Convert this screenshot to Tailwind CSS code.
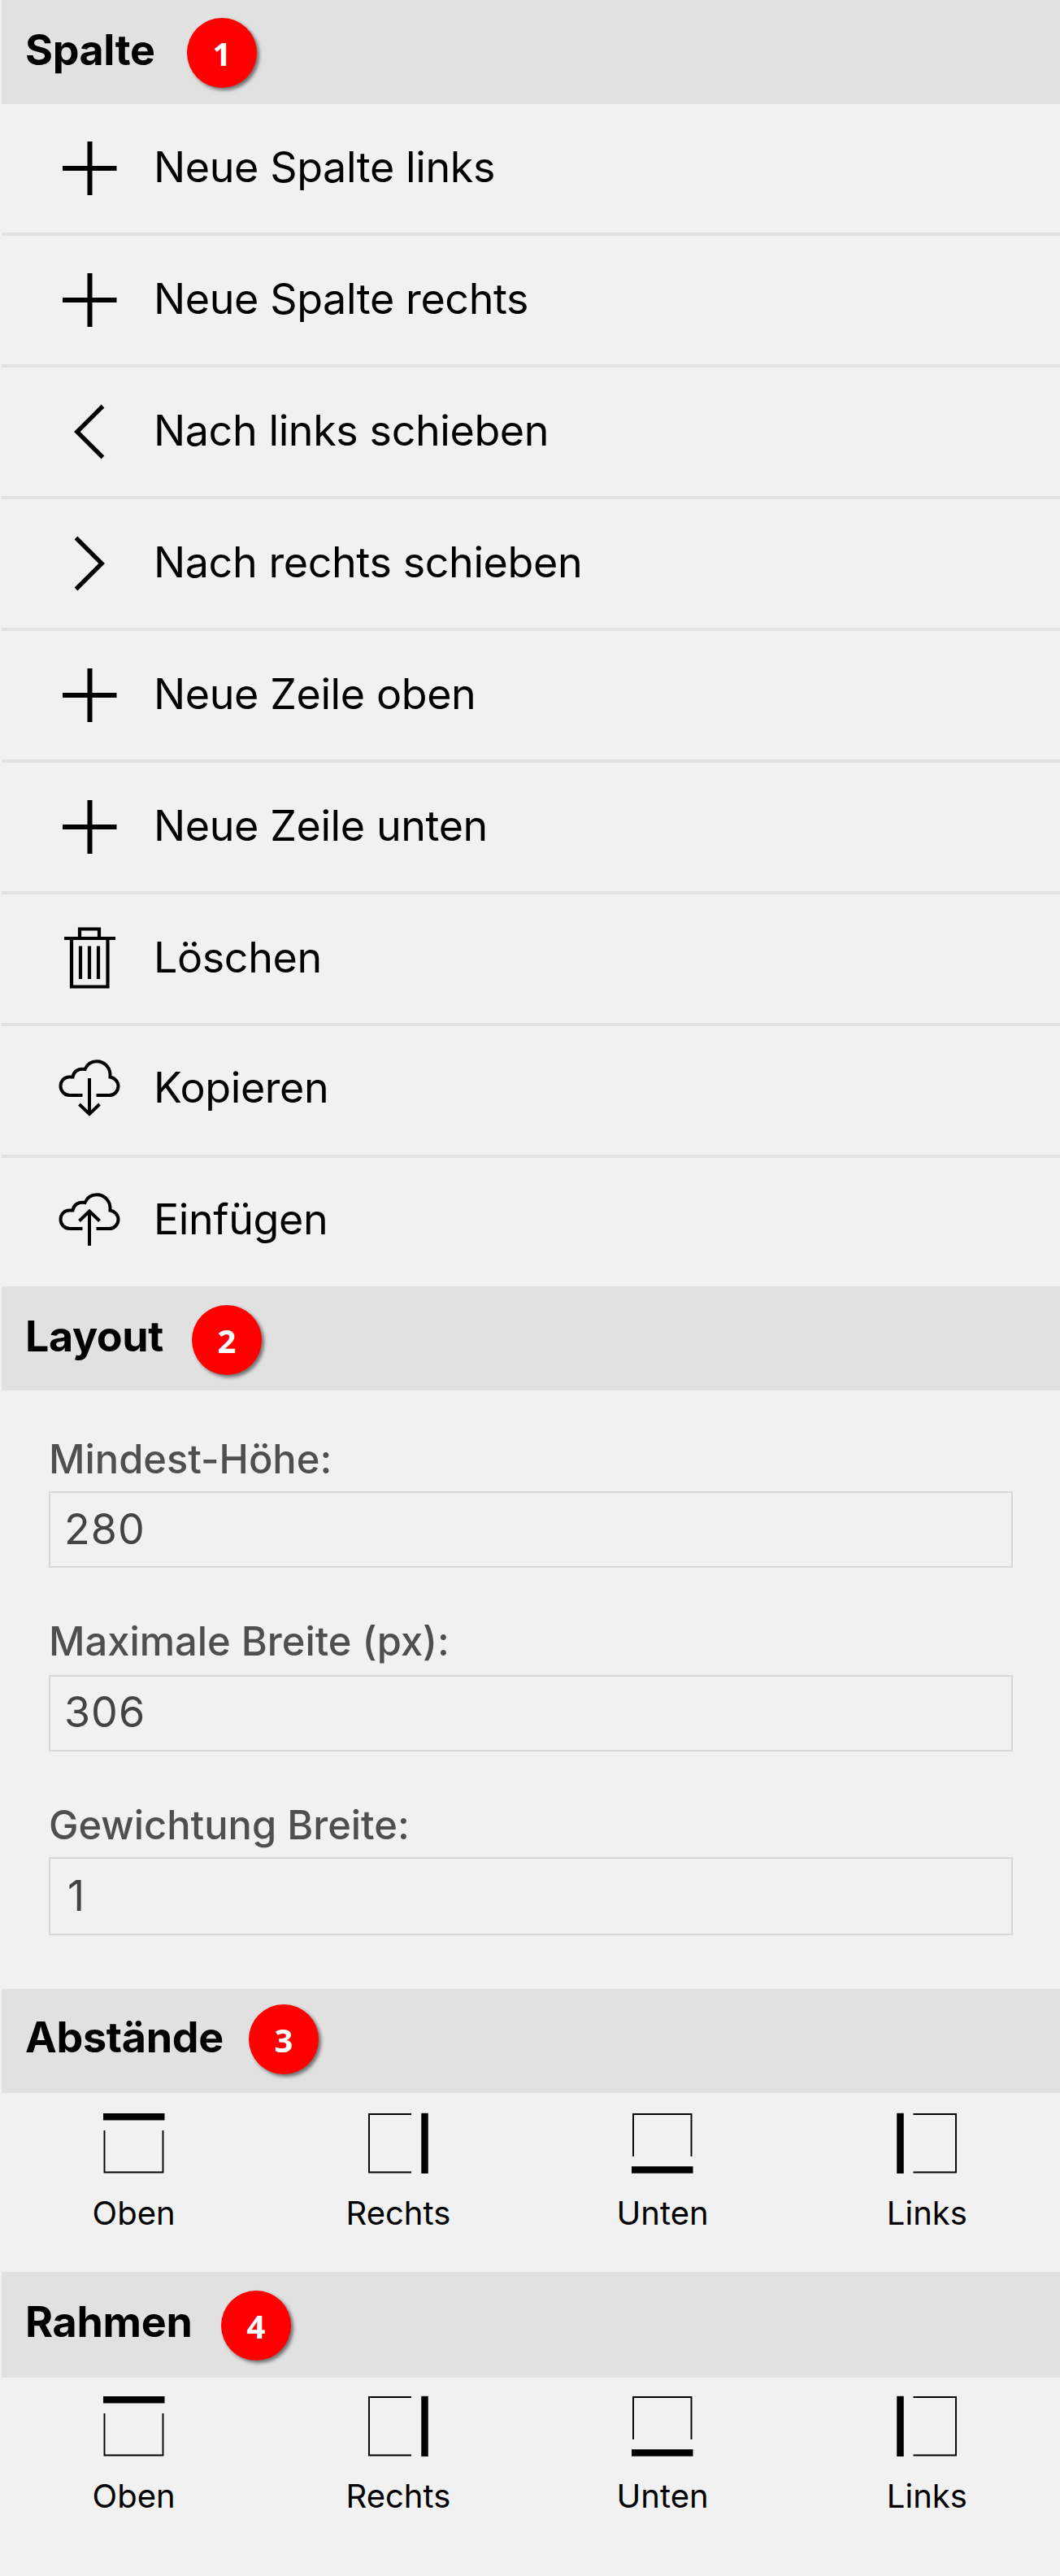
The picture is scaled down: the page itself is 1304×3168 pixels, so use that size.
<!DOCTYPE html>
<html lang="de">
<head>
<meta charset="utf-8">
<title>Spalte</title>
<script src="https://cdn.jsdelivr.net/npm/@tailwindcss/browser@4"></script>
</head>
<body class="bg-[#f1f1f1] font-['Inter',sans-serif] text-black">
<svg class="hidden">
  <defs>
    <symbol id="plus" viewBox="70 0 80 158"><path d="M110.500 46V112M77 79H143.500" fill="none" stroke="currentColor" stroke-width="6"/></symbol>
    <symbol id="left" viewBox="70 0 80 158"><path d="M126.500 47.500L94.800 79L126.500 110.500" fill="none" stroke="currentColor" stroke-width="5.300"/></symbol>
    <symbol id="right" viewBox="70 0 80 158"><path d="M93.500 47.500L125.200 79L93.500 110.500" fill="none" stroke="currentColor" stroke-width="5.300"/></symbol>
    <symbol id="trash" viewBox="70 0 80 158"><path d="M79 54H142M98 54V42.500H122V54M88 54V113.500H132.500V54M99 63.500V104M110 63.500V104M121 63.500V104" fill="none" stroke="currentColor" stroke-width="4.200"/></symbol>
    <symbol id="cloud" viewBox="70 0 80 158"><path d="M101.500 85H86C79.500 85 74.500 80 74.500 73.800C74.500 67 79.500 62.500 85 62.500H89.500C90.500 56 96 51.500 104.500 53C107 47 112.500 43.200 119 43.200C128.500 43.200 136.500 51 135.500 62.500C141 63.500 145.500 68 145.500 73.800C145.500 80 140.500 85 134.500 85H118.500" fill="none" stroke="currentColor" stroke-width="4"/></symbol>
    <symbol id="top" viewBox="0 0 76 76"><path d="M0 5.200H75.500" stroke="currentColor" stroke-width="8.500"/><path d="M1.500 22V73.500H73.500V22" fill="none" stroke="currentColor" stroke-width="1.900"/></symbol>
  </defs>
</svg>
<main class="flex h-[3168px] flex-col pl-[2px]">
  <header class="flex h-[128px] shrink-0 items-center bg-[#e1e1e1] pl-[29px]">
    <h2 class="-mt-[4px] w-[199px] text-[52px] leading-none font-bold tracking-[-0.4px]">Spalte</h2>
    <span class="mt-[2px] flex size-[86px] items-center justify-center rounded-full bg-[#f00] pt-[2px] font-['Open_Sans'] text-[40px] leading-none font-bold text-white shadow-[3px_3px_4px_rgba(0,0,0,0.5)]">1</span>
  </header>
  <ul class="shrink-0 divide-y-4 divide-[#e1e1e1] text-[52px] leading-none tracking-[-0.4px]">
    <li class="flex h-[162px] items-center pl-[68px]"><svg class="h-[158px] w-[80px]"><use href="#plus"/></svg><span class="-mt-[2px] pl-[39px]">Neue Spalte links</span></li>
    <li class="flex h-[162px] items-center pl-[68px]"><svg class="h-[158px] w-[80px]"><use href="#plus"/></svg><span class="-mt-[2px] pl-[39px]">Neue Spalte rechts</span></li>
    <li class="flex h-[162px] items-center pl-[68px]"><svg class="h-[158px] w-[80px]"><use href="#left"/></svg><span class="-mt-[2px] pl-[39px]">Nach links schieben</span></li>
    <li class="flex h-[162px] items-center pl-[68px]"><svg class="h-[158px] w-[80px]"><use href="#right"/></svg><span class="-mt-[2px] pl-[39px]">Nach rechts schieben</span></li>
    <li class="flex h-[162px] items-center pl-[68px]"><svg class="h-[158px] w-[80px]"><use href="#plus"/></svg><span class="-mt-[2px] pl-[39px]">Neue Zeile oben</span></li>
    <li class="flex h-[162px] items-center pl-[68px]"><svg class="h-[158px] w-[80px]"><use href="#plus"/></svg><span class="-mt-[2px] pl-[39px]">Neue Zeile unten</span></li>
    <li class="flex h-[162px] items-center pl-[68px]"><svg class="h-[158px] w-[80px]"><use href="#trash"/></svg><span class="-mt-[2px] pl-[39px]">Löschen</span></li>
    <li class="flex h-[162px] items-center pl-[68px]"><svg class="h-[158px] w-[80px]" viewBox="70 0 80 158"><use href="#cloud" x="70" width="80" height="158"/><path d="M110 64V108M97.500 96L110 108L122.500 96" fill="none" stroke="currentColor" stroke-width="4"/></svg><span class="-mt-[6px] pl-[39px]">Kopieren</span></li>
    <li class="flex h-[158px] items-center pl-[68px]"><svg class="h-[158px] w-[80px]" viewBox="70 0 80 158"><use href="#cloud" x="70" y="2" width="80" height="158"/><path d="M110 108V66M97.500 77.500L110 65.500L122.500 77.500" fill="none" stroke="currentColor" stroke-width="4"/></svg><span class="-mt-[6px] pl-[39px]">Einfügen</span></li>
  </ul>
  <header class="flex h-[128px] shrink-0 items-center bg-[#e1e1e1] pl-[29px]">
    <h2 class="-mt-[4px] w-[205px] text-[52px] leading-none font-bold tracking-[-0.4px]">Layout</h2>
    <span class="mt-[4px] flex size-[86px] items-center justify-center rounded-full bg-[#f00] pt-[2px] font-['Open_Sans'] text-[40px] leading-none font-bold text-white shadow-[3px_3px_4px_rgba(0,0,0,0.5)]">2</span>
  </header>
  <section class="flex h-[736px] shrink-0 flex-col pr-[58px] pl-[58px] text-[#4f4f4f]">
    <label class="mt-[60px] h-[48px] text-[48.8px] leading-[49px] font-medium">Mindest-Höhe:</label>
    <div class="mt-[16px] flex h-[94px] items-center border-2 border-[#d8d8d8] pl-[17px] text-[52px] leading-none tracking-[1px] text-[#444]">280</div>
    <label class="mt-[66px] h-[48px] text-[48.8px] leading-[49px] font-medium">Maximale Breite (px):</label>
    <div class="mt-[18px] flex h-[94px] items-center border-2 border-[#d8d8d8] pb-[3px] pl-[17px] text-[52px] leading-none tracking-[1px] text-[#444]">306</div>
    <label class="mt-[66px] h-[48px] text-[48.8px] leading-[49px] font-medium">Gewichtung Breite:</label>
    <div class="mt-[16px] flex h-[96px] items-center border-2 border-[#d8d8d8] pb-[1px] pl-[21px] text-[52px] leading-none tracking-[1px] text-[#444]">1</div>
  </section>
  <header class="flex h-[128px] shrink-0 items-center bg-[#e1e1e1] pl-[29px]">
    <h2 class="-mt-[8px] w-[275px] text-[52px] leading-none font-bold tracking-[-0.3px]">Abstände</h2>
    <span class="-mt-[4px] flex size-[86px] items-center justify-center rounded-full bg-[#f00] pt-[2px] font-['Open_Sans'] text-[40px] leading-none font-bold text-white shadow-[3px_3px_4px_rgba(0,0,0,0.5)]">3</span>
  </header>
  <section class="grid h-[220px] shrink-0 grid-cols-4 pt-[24px] pr-[1px] text-[40px] leading-[40px]">
    <div class="flex flex-col items-center gap-[28px]"><svg class="size-[76px]"><use href="#top"/></svg>Oben</div>
    <div class="flex flex-col items-center gap-[28px]"><svg class="size-[76px]" viewBox="0 0 76 76"><path d="M70.500 .8V75" stroke="#000" stroke-width="8.500"/><path d="M54 2H2V73.500H54" fill="none" stroke="#000" stroke-width="1.900"/></svg>Rechts</div>
    <div class="flex flex-col items-center gap-[28px]"><svg class="size-[76px]" viewBox="0 0 76 76"><path d="M0 70.500H75.500" stroke="#000" stroke-width="8.500"/><path d="M2 54V2H73.500V54" fill="none" stroke="#000" stroke-width="1.900"/></svg>Unten</div>
    <div class="flex flex-col items-center gap-[28px]"><svg class="size-[76px]" viewBox="0 0 76 76"><path d="M5.500 .8V75" stroke="#000" stroke-width="8.500"/><path d="M21.500 2H74V73.500H21.500" fill="none" stroke="#000" stroke-width="1.900"/></svg>Links</div>
  </section>
  <header class="flex h-[130px] shrink-0 items-center bg-[#e1e1e1] pl-[29px]">
    <h2 class="-mt-[7px] w-[241px] text-[52px] leading-none font-bold tracking-[-0.3px]">Rahmen</h2>
    <span class="mt-[2px] flex size-[86px] items-center justify-center rounded-full bg-[#f00] pt-[2px] font-['Open_Sans'] text-[40px] leading-none font-bold text-white shadow-[3px_3px_4px_rgba(0,0,0,0.5)]">4</span>
  </header>
  <section class="grid shrink-0 grid-cols-4 pt-[22px] pr-[1px] text-[40px] leading-[40px]">
    <div class="flex flex-col items-center gap-[28px]"><svg class="size-[76px]"><use href="#top"/></svg>Oben</div>
    <div class="flex flex-col items-center gap-[28px]"><svg class="size-[76px]" viewBox="0 0 76 76"><path d="M70.500 .8V75" stroke="#000" stroke-width="8.500"/><path d="M54 2H2V73.500H54" fill="none" stroke="#000" stroke-width="1.900"/></svg>Rechts</div>
    <div class="flex flex-col items-center gap-[28px]"><svg class="size-[76px]" viewBox="0 0 76 76"><path d="M0 70.500H75.500" stroke="#000" stroke-width="8.500"/><path d="M2 54V2H73.500V54" fill="none" stroke="#000" stroke-width="1.900"/></svg>Unten</div>
    <div class="flex flex-col items-center gap-[28px]"><svg class="size-[76px]" viewBox="0 0 76 76"><path d="M5.500 .8V75" stroke="#000" stroke-width="8.500"/><path d="M21.500 2H74V73.500H21.500" fill="none" stroke="#000" stroke-width="1.900"/></svg>Links</div>
  </section>
</main>
</body>
</html>
